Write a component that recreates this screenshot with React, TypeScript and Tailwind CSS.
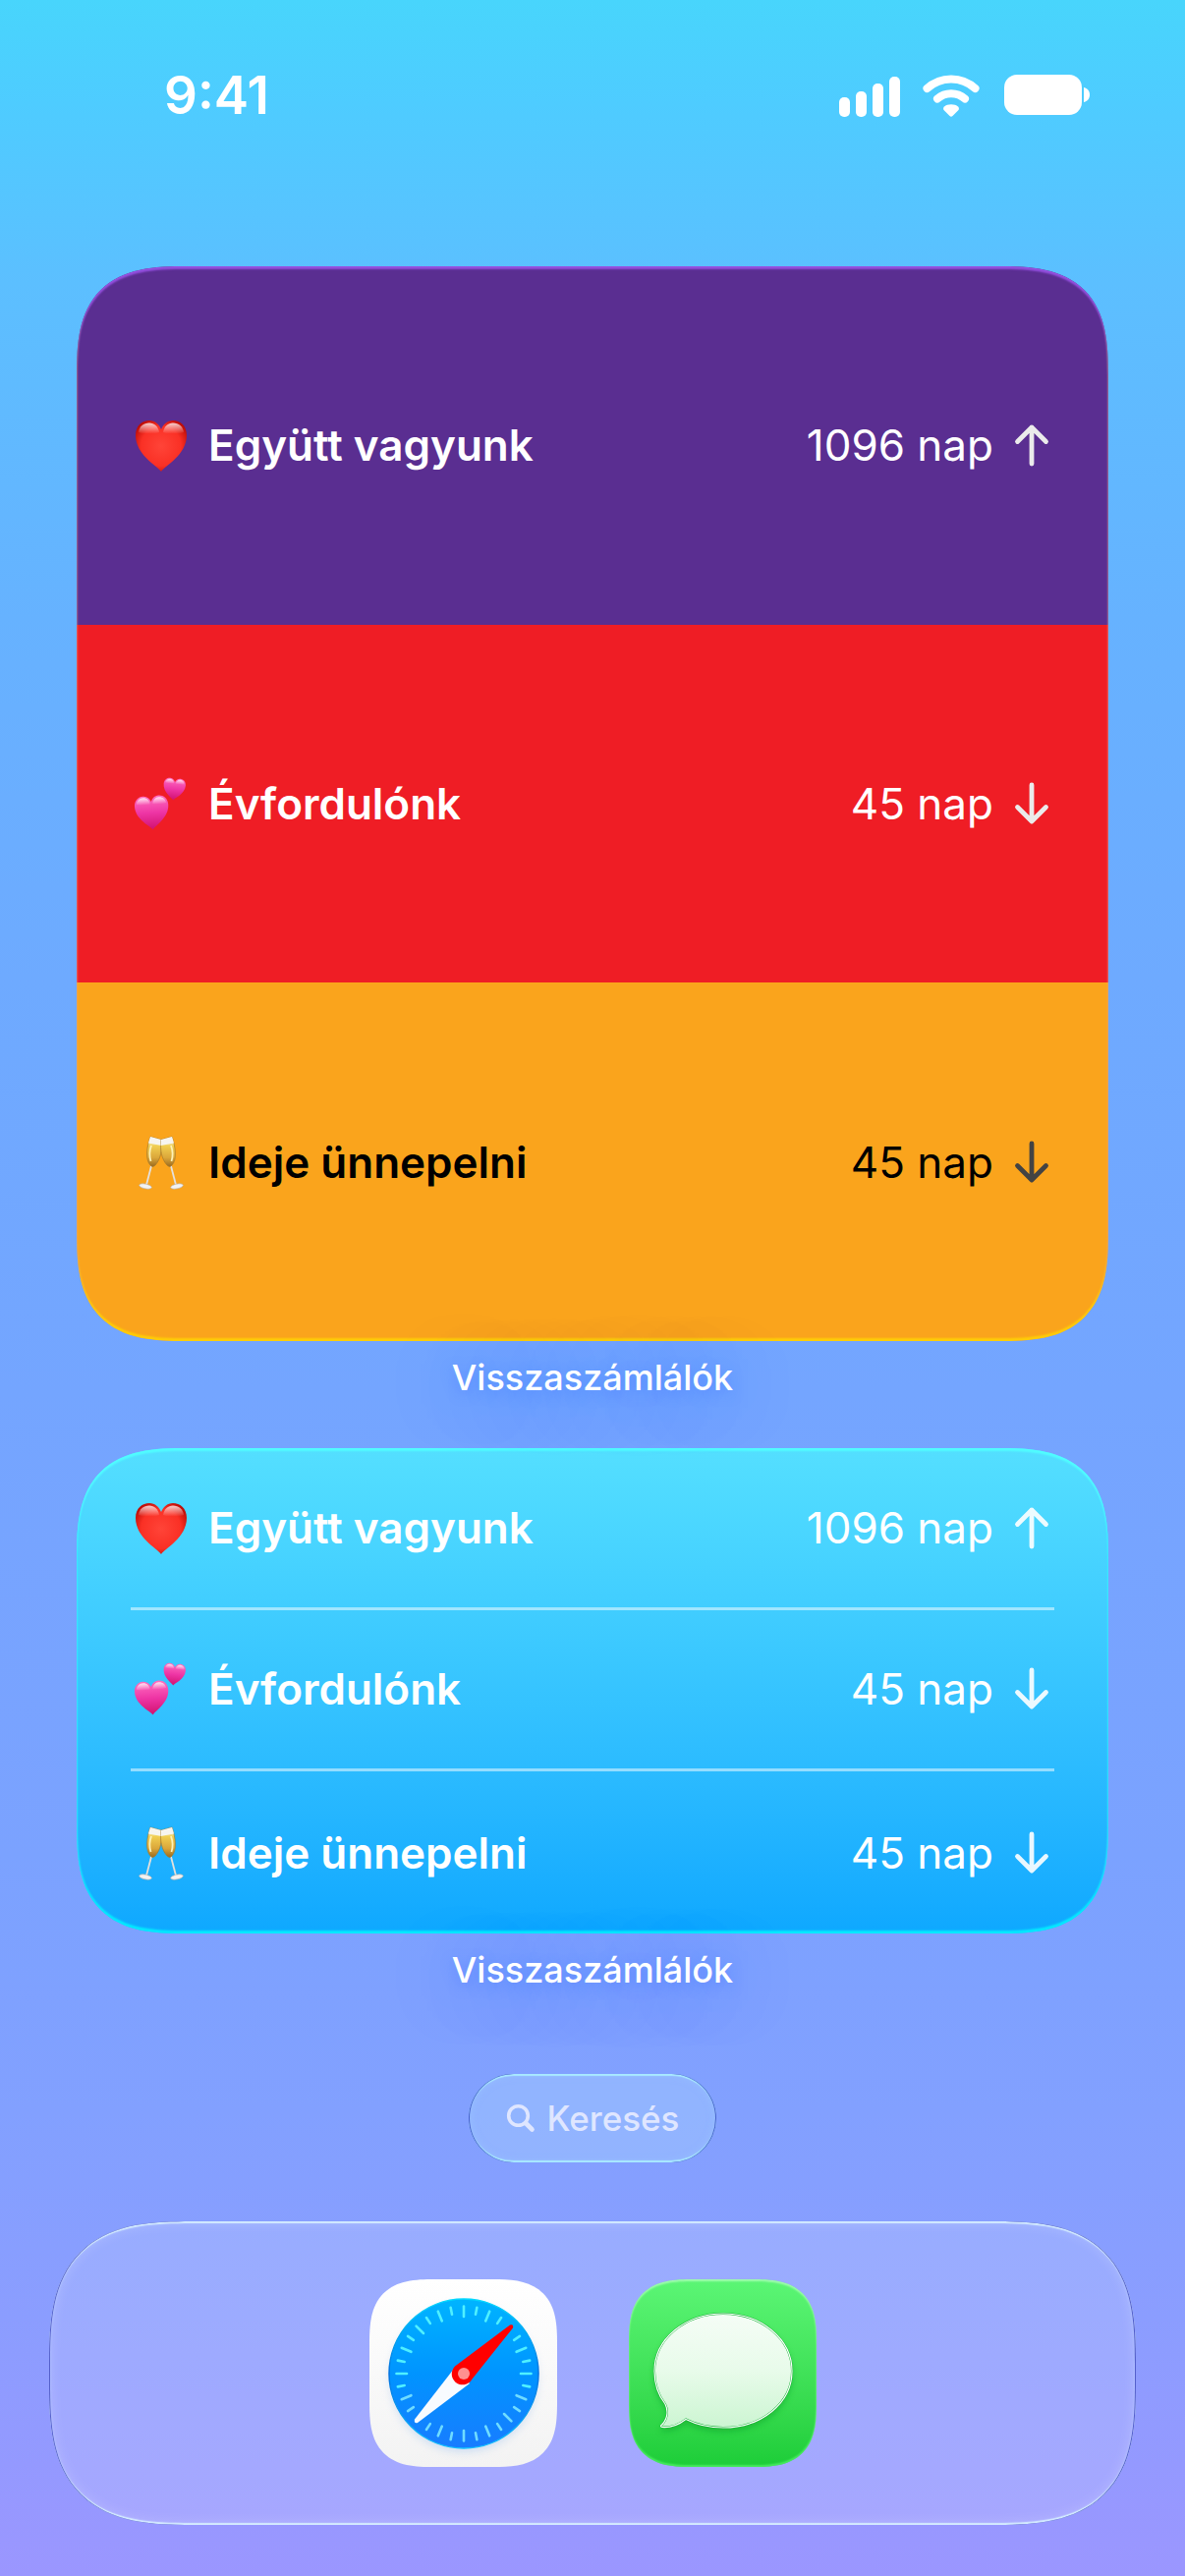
import type { ReactNode } from 'react';

type Emoji = 'heart' | 'hearts' | 'toast';
type Direction = 'up' | 'down';

interface Countdown {
  emoji: Emoji;
  title: string;
  days: number;
  direction: Direction;
  band: string;
  arrow: string;
}

const countdowns: Countdown[] = [
  {
    emoji: 'heart',
    title: 'Együtt vagyunk',
    days: 1096,
    direction: 'up',
    band: 'bg-[#5a2e91] text-white',
    arrow: 'text-[#ebebeb]',
  },
  {
    emoji: 'hearts',
    title: 'Évfordulónk',
    days: 45,
    direction: 'down',
    band: 'bg-[#ef1d25] text-white',
    arrow: 'text-[#ebebeb]',
  },
  {
    emoji: 'toast',
    title: 'Ideje ünnepelni',
    days: 45,
    direction: 'down',
    band: 'bg-[#faa41c] text-black',
    arrow: 'text-[#434343]',
  },
];

const HEART = 'M31 57C27 51 5 40 5 20C5 10 12 5 19 5C25 5 29 9 31 14C33 9 37 5 43 5C50 5 57 10 57 20C57 40 35 51 31 57Z';

function EmojiDefs() {
  return (
    <svg className="absolute" width="0" height="0" aria-hidden="true">
      <defs>
        <radialGradient id="red" cx="0.5" cy="0.5" r="0.6">
          <stop offset="0" stopColor="#ff4438" />
          <stop offset="0.65" stopColor="#fa3025" />
          <stop offset="1" stopColor="#b80a04" />
        </radialGradient>
        <linearGradient id="pink" x1="0" y1="0" x2="0" y2="1">
          <stop offset="0" stopColor="#ff6fc0" />
          <stop offset="0.5" stopColor="#ee35a5" />
          <stop offset="1" stopColor="#d0116f" />
        </linearGradient>
        <linearGradient id="shine" x1="0" y1="0" x2="0" y2="1">
          <stop offset="0" stopColor="#fff" stopOpacity="0.8" />
          <stop offset="1" stopColor="#fff" stopOpacity="0" />
        </linearGradient>
        <linearGradient id="wine" x1="0" y1="0" x2="0" y2="1">
          <stop offset="0" stopColor="#f6f4ee" />
          <stop offset="0.2" stopColor="#f2e6ae" />
          <stop offset="0.3" stopColor="#f1cf52" />
          <stop offset="0.7" stopColor="#dba73a" />
          <stop offset="1" stopColor="#9c6a1e" />
        </linearGradient>
      </defs>
    </svg>
  );
}

function Heart({ fill }: { fill: string }) {
  return (
    <>
      <path d={HEART} fill={fill} />
      <path d="M8 17C9 11 13 7.500 19 7.500C24 7.500 28 11 29 17C24 19 14 19 8 17Z" fill="url(#shine)" />
      <path d="M54 17C53 11 49 7.500 43 7.500C38 7.500 34 11 33 17C38 19 48 19 54 17Z" fill="url(#shine)" />
    </>
  );
}

function Flute() {
  return (
    <g>
      <path d="M21.500 32L16 53" stroke="#e4e0dc" strokeWidth="1.800" />
      <ellipse cx="15" cy="54.500" rx="6.500" ry="2.400" fill="#f2f2f2" stroke="#b9b2ab" strokeWidth="0.600" transform="rotate(12 15 54.500)" />
      <path d="M20 4L31 7C32.500 17 30.500 27 25 33Q22 36 20 33C14.500 27 16.500 14 20 4Z" fill="url(#wine)" stroke="#a37a2c" strokeWidth="0.700" />
      <path d="M20 4L31 7L31.500 13L18 10.500Z" fill="#f7f5f0" />
      <path d="M21 13Q18 21 20.500 29" stroke="#fdf2b8" strokeWidth="1.800" fill="none" />
    </g>
  );
}

function EmojiIcon({ name }: { name: Emoji }) {
  return (
    <svg viewBox="0 0 60 60" className="size-[60px] shrink-0" aria-hidden="true">
      {name === 'heart' && <Heart fill="url(#red)" />}
      {name === 'hearts' && (
        <>
          <g transform="translate(1 19) rotate(-4 18 18) scale(0.66)">
            <Heart fill="url(#pink)" />
          </g>
          <g transform="translate(31 2) rotate(6 13 13) scale(0.43)">
            <Heart fill="url(#pink)" />
          </g>
        </>
      )}
      {name === 'toast' && (
        <>
          <Flute />
          <g transform="translate(62 0) scale(-1 1)">
            <Flute />
          </g>
        </>
      )}
    </svg>
  );
}

function ArrowIcon({ direction, className }: { direction: Direction; className: string }) {
  return (
    <svg
      viewBox="0 0 46 46"
      className={`size-[46px] shrink-0 ${className}`}
      fill="none"
      stroke="currentColor"
      strokeWidth="4.800"
      strokeLinecap="round"
      strokeLinejoin="round"
      aria-hidden="true"
    >
      {direction === 'up' ? <path d="M23 42V5M8.500 19.500L23 5L37.500 19.500" /> : <path d="M23 4V41M8.500 26.500L23 41L37.500 26.500" />}
    </svg>
  );
}

function CountdownRow({ item, className, arrow }: { item: Countdown; className: string; arrow: string }) {
  return (
    <li className={`flex items-center text-[44px] leading-[52px] ${className}`}>
      <EmojiIcon name={item.emoji} />
      <span className="ml-[19px] flex-1 font-semibold">{item.title}</span>
      <span className="mr-4">{item.days} nap</span>
      <ArrowIcon direction={item.direction} className={arrow} />
    </li>
  );
}

function Widget({ className, children }: { className: string; children: ReactNode }) {
  return (
    <figure className="mb-[50px]">
      <ul className={`grid auto-rows-fr overflow-hidden rounded-[112px] [corner-shape:superellipse(1.5)] ${className}`}>{children}</ul>
      <figcaption className="relative mt-[15px] text-center text-[36px] leading-[44px] font-medium text-white [text-shadow:0_4px_14px_rgba(60,120,255,0.4),0_6px_60px_rgba(50,120,255,0.55)]">
        Visszaszámlálók
      </figcaption>
    </figure>
  );
}

function StatusBar() {
  return (
    <header className="flex h-[44px] items-center justify-between pr-24 pl-[167px] text-white">
      <time className="text-[53px] leading-[44px] font-semibold">9:41</time>
      <svg viewBox="853 74 257 46" className="h-[46px] w-[257px]" fill="currentColor" aria-hidden="true">
        <rect x="854" y="99" width="11" height="20" rx="5" />
        <rect x="871" y="93" width="11" height="26" rx="5" />
        <rect x="888" y="85" width="11" height="34" rx="5" />
        <rect x="905" y="78" width="11" height="41" rx="5" />
        <g fill="none" stroke="currentColor" strokeWidth="8" strokeLinecap="round">
          <path d="M943.500 90A36 36 0 0 1 992.500 90" />
          <path d="M954 100.500A21 21 0 0 1 982 100.500" />
        </g>
        <path d="M961 108.500C964 105.500 972 105.500 975 108.500C976.500 110 976 111.500 975 112.500L969.500 118Q968 119.300 966.500 118L961 112.500C960 111.500 959.500 110 961 108.500Z" />
        <rect x="1022" y="76" width="79" height="41" rx="13" />
        <path d="M1103 89C1107.500 90 1109 93.500 1109 96.500C1109 99.500 1107.500 103 1103 104Z" />
      </svg>
    </header>
  );
}

function SafariIcon() {
  const ticks = Array.from({ length: 32 }, (_, i) => i).filter((i) => i !== 4 && i !== 20);
  return (
    <svg viewBox="0 0 191 191" className="size-full" aria-hidden="true">
      <defs>
        <linearGradient id="dial" x1="0" y1="0" x2="0" y2="1">
          <stop offset="0" stopColor="#00b4ff" />
          <stop offset="0.5" stopColor="#0094ff" />
          <stop offset="1" stopColor="#187cff" />
        </linearGradient>
        <linearGradient id="rim" x1="0" y1="0" x2="0" y2="1">
          <stop offset="0" stopColor="#00d8ff" />
          <stop offset="0.5" stopColor="#0070e0" />
          <stop offset="1" stopColor="#10c0ff" />
        </linearGradient>
        <filter id="soft" x="-20%" y="-20%" width="140%" height="140%">
          <feGaussianBlur stdDeviation="4" />
        </filter>
      </defs>
      <circle cx="96" cy="101" r="75" fill="#a9c8f0" opacity="0.5" filter="url(#soft)" />
      <circle cx="96" cy="96" r="76" fill="url(#dial)" stroke="url(#rim)" strokeWidth="1.500" />
      <g strokeWidth="2.600" strokeLinecap="round">
        {ticks.map((i) => (
          <line
            key={i}
            x1="96"
            x2="96"
            y1="27.500"
            y2={i % 2 === 0 ? 38 : 34.500}
            stroke={i > 9 && i < 23 ? '#6fdcff' : '#4ff0ff'}
            transform={`rotate(${i * 11.25} 96 96)`}
          />
        ))}
      </g>
      <path d="M86 91L46 142.500Q45 147 49 146L102 106Z" fill="#f8fbff" />
      <path d="M89 87L143 46.500Q147 45 146 49.500L104.500 101.500A11 11 0 1 1 89 87Z" fill="#ff0000" />
      <circle cx="96" cy="96" r="6" fill="#ff9090" />
    </svg>
  );
}

function MessagesIcon() {
  const bubble = 'M96 35C135 35 166 61 166 93.500C166 126 135 151 96 151C82 151 69 148 58 142.500C51 148 42 151 34 150.500Q31 150 34 147.500C40 141 40 133 37 127C30 118 26 107 26 93.500C26 61 57 35 96 35Z';
  return (
    <svg viewBox="0 0 191 191" className="size-full" aria-hidden="true">
      <defs>
        <linearGradient id="bubble" x1="0" y1="0" x2="0" y2="1">
          <stop offset="0" stopColor="#f5fdf6" />
          <stop offset="0.5" stopColor="#e8fbea" />
          <stop offset="1" stopColor="#ccf5d2" />
        </linearGradient>
        <filter id="drop" x="-20%" y="-20%" width="140%" height="140%">
          <feGaussianBlur stdDeviation="3" />
        </filter>
      </defs>
      <path d={bubble} fill="#0a9c28" opacity="0.5" transform="translate(0 4)" filter="url(#drop)" />
      <path d={bubble} fill="url(#bubble)" stroke="#12b032" strokeWidth="2" />
      <path d={bubble} fill="none" stroke="#fff" strokeWidth="1.200" />
    </svg>
  );
}

function Dock() {
  const app = 'block size-[191px] overflow-hidden rounded-[66px] [corner-shape:superellipse(1.5)]';
  return (
    <nav className="mx-[50px] mt-[60px] flex justify-center gap-[73px] rounded-[145px] bg-white/15 px-8 py-[59px] shadow-[inset_1px_0_0_rgba(60,70,190,0.8),inset_-1px_0_0_rgba(60,70,190,0.8),inset_0_2px_1px_rgba(215,240,255,0.9),inset_0_-2px_1px_rgba(215,240,255,0.9),inset_0_0_3px_1px_rgba(190,215,255,0.5),inset_0_0_14px_rgba(255,255,255,0.25)] [corner-shape:superellipse(1.5)]">
      <a href="#safari" aria-label="Safari" className={`${app} bg-gradient-to-b from-white to-[#f3f3f3]`}>
        <SafariIcon />
      </a>
      <a
        href="#messages"
        aria-label="Messages"
        className={`${app} bg-gradient-to-b from-[#5bf675] to-[#1ccd38] shadow-[inset_0_2px_2px_rgba(190,255,200,0.7),inset_0_-2px_2px_rgba(100,255,120,0.6)]`}
      >
        <MessagesIcon />
      </a>
    </nav>
  );
}

export default function App() {
  return (
    <div className="flex min-h-screen flex-col bg-[linear-gradient(to_bottom,#48d5fc_0%,#4eccff_4%,#5cbfff_11%,#66b2ff_24%,#6eaaff_38%,#74a5ff_54%,#7ba2ff_72%,#82a0ff_82%,#8b9dff_90%,#9b96ff_100%)] pt-[75px] font-['Inter','Noto_Sans',sans-serif]">
      <EmojiDefs />
      <StatusBar />
      <main className="mx-[78px] mt-[152px]">
        <Widget className="relative min-h-[1094px] after:pointer-events-none after:absolute after:inset-0 after:rounded-[112px] after:shadow-[inset_0_3px_2px_rgba(170,90,255,0.7),inset_0_-3px_2px_rgba(255,214,0,0.8),inset_0_0_3px_rgba(255,255,255,0.25)] after:[corner-shape:superellipse(1.5)]">
          {countdowns.map((item) => (
            <CountdownRow key={item.title} item={item} className={`px-[55px] ${item.band}`} arrow={item.arrow} />
          ))}
        </Widget>
        <Widget className="min-h-[494px] divide-y-[3px] divide-white/50 bg-gradient-to-b from-[#54dfff] to-[#0ea8ff] px-[55px] text-white shadow-[inset_0_3px_2px_rgba(80,255,255,0.9),inset_0_-3px_2px_rgba(0,240,255,0.9),inset_0_0_3px_rgba(80,255,255,0.6)]">
          {countdowns.map((item) => (
            <CountdownRow key={item.title} item={item} className="py-[50px]" arrow="text-white/90" />
          ))}
        </Widget>
      </main>
      <button
        type="button"
        className="mt-[34px] flex items-center gap-[12px] self-center rounded-full bg-[#a5ccff]/45 px-[38px] py-[23px] text-[35px] leading-[44px] font-medium text-[#dfe6ff] shadow-[inset_1px_0_0_rgba(50,70,190,0.8),inset_-1px_0_0_rgba(50,70,190,0.8),inset_0_2px_1px_rgba(170,235,255,0.95),inset_0_-2px_1px_rgba(170,235,255,0.95),inset_0_0_8px_rgba(160,210,255,0.5)]"
      >
        <svg viewBox="0 0 30 30" className="size-[30px]" fill="none" stroke="currentColor" strokeLinecap="round" aria-hidden="true">
          <circle cx="12.500" cy="12.500" r="9.800" strokeWidth="3.600" />
          <path d="M20 20L26.500 26.500" strokeWidth="4.600" />
        </svg>
        Keresés
      </button>
      <Dock />
      <div className="h-[51px]" />
    </div>
  );
}
